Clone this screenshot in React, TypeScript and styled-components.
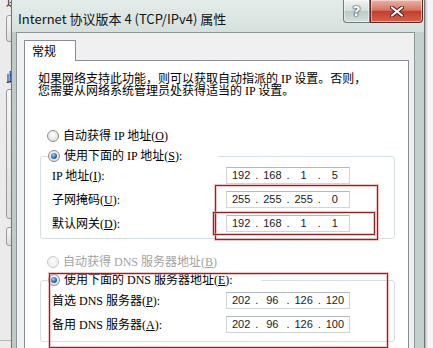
import React from "react";
import styled, { createGlobalStyle } from "styled-components";

const GlobalStyle = createGlobalStyle`
  html, body { margin: 0; padding: 0; }
  body { width: 433px; height: 348px; overflow: hidden; background: #f3f3f3; }
  #root { width: 433px; height: 348px; }
`;

const SONG = `"Liberation Serif", "Noto Sans CJK SC", serif`;
const UI = `"Noto Sans CJK SC", "Noto Sans", sans-serif`;

const Desktop = styled.div`
  position: relative;
  width: 433px;
  height: 348px;
  overflow: hidden;
  background: #f4f4f4;
`;

/* ---------- background window (left, mostly covered) ---------- */
const BackWindow = styled.div`
  display: flex;
  flex-direction: column;
  width: 120px;
  height: 100%;
  padding-left: 6px;
  box-sizing: border-box;
  background: #ebebeb;
  font: 12px/12px ${UI};
  color: #111;
`;
const BackCaption = styled.div`
  margin-top: -5px;
  height: 12px;
  white-space: nowrap;
`;
const BackBox = styled.div<{ $h: number; $mt: number }>`
  margin-top: ${(p) => p.$mt}px;
  height: ${(p) => p.$h}px;
  border: 1px solid #9a9a9a;
  border-radius: 3px;
  background: linear-gradient(#f7f7f7, #dedede);
`;
const BackLabel = styled.div`
  margin-top: 29px;
  height: 12px;
`;
const BackRule = styled.div`
  margin-top: 94px;
  height: 1px;
  margin-left: -6px;
  background: #b5b5b5;
`;

/* ---------- dialog ---------- */
const Dialog = styled.div`
  position: absolute;
  left: 11px;
  top: 0;
  width: 414px;
  bottom: -30px;
  box-sizing: border-box;
  display: flex;
  flex-direction: column;
  border: 1px solid #6b7877;
  border-top: none;
  background: linear-gradient(90deg, #bfcbc8, #d3dddb 50%, #c4d0cd);
  box-shadow: 1px 0 2px rgba(0, 0, 0, 0.35);
`;
const TitleBar = styled.div`
  display: flex;
  align-items: flex-start;
  height: 32px;
  padding-left: 6px;
  background: linear-gradient(#e4ecea, #d5e0dd);
`;
const Title = styled.div`
  flex: 1;
  padding-top: 11px;
  font: 13px/15px ${UI};
  color: #141414;
  white-space: nowrap;
`;
const CaptionButtons = styled.div`
  display: flex;
  margin-right: 1px;
`;
const CaptionButton = styled.div<{ $kind: "help" | "close" }>`
  display: flex;
  align-items: center;
  justify-content: center;
  box-sizing: border-box;
  height: 23px;
  width: ${(p) => (p.$kind === "help" ? 27 : 53)}px;
  border: 1px solid ${(p) => (p.$kind === "help" ? "#6d7b7a" : "#5b2a25")};
  border-top: none;
  border-radius: ${(p) => (p.$kind === "help" ? "0 0 0 4px" : "0 0 4px 0")};
  background: ${(p) =>
    p.$kind === "help"
      ? "linear-gradient(#f0f4f3, #d4dedc 48%, #bccac8 52%, #d6e0de)"
      : "linear-gradient(#eab3a8, #d67563 46%, #c2402f 52%, #d8604b)"};
  box-shadow: inset 0 0 0 1px rgba(255, 255, 255, 0.45);
`;
const HelpGlyph = styled.span`
  font: bold 14px/14px "DejaVu Sans", sans-serif;
  color: #ffffff;
  text-shadow: 0 0 1px #3a4747, 0 0 1px #3a4747, 0 0 2px #3a4747;
`;

const DialogBody = styled.div`
  flex: 1;
  display: flex;
  padding: 0 9px 0 4px;
`;
const Client = styled.div`
  flex: 1;
  display: flex;
  flex-direction: column;
  border: 1px solid #8b9796;
  border-bottom: none;
  background: #f0f0f0;
  padding: 7px 5px 0 7px;
`;
const TabStrip = styled.div`
  display: flex;
  margin-bottom: -1px;
  position: relative;
  z-index: 1;
`;
const Tab = styled.div`
  box-sizing: border-box;
  width: 52px;
  height: 21px;
  display: flex;
  align-items: center;
  padding-left: 7px;
  border: 1px solid #898c95;
  border-bottom: none;
  background: #ffffff;
  font: 12px/12px ${UI};
  color: #000;
`;
const Panel = styled.div`
  flex: 1;
  border: 1px solid #898c95;
  background: #ffffff;
  padding: 12px 0 0 13px;
  font: 12px/12px ${SONG};
  color: #000;
`;
const Intro = styled.p`
  margin: 0;
  white-space: nowrap;
  line-height: 12px;
`;
const Options = styled.div`
  display: flex;
  flex-direction: column;
  margin-top: 32px;
  margin-left: 2px;
`;
const RadioRow = styled.label<{ $disabled?: boolean; $mt?: number; $mb?: number }>`
  display: flex;
  align-items: center;
  gap: 4px;
  height: 14px;
  padding-left: 7px;
  margin-top: ${(p) => p.$mt ?? 0}px;
  margin-bottom: ${(p) => p.$mb ?? 0}px;
  color: ${(p) => (p.$disabled ? "#a2a2a2" : "#000")};
  white-space: nowrap;
`;
const Radio = styled.span<{ $checked?: boolean; $disabled?: boolean }>`
  box-sizing: border-box;
  width: 12px;
  height: 12px;
  flex: none;
  border-radius: 50%;
  border: 1px solid ${(p) => (p.$disabled ? "#c9c9c9" : "#8c8e8e")};
  background: ${(p) =>
    p.$disabled
      ? "radial-gradient(circle at 50% 40%, #fbfbfb, #ececec)"
      : "radial-gradient(circle at 50% 40%, #ffffff, #d8d8d8)"};
  display: flex;
  align-items: center;
  justify-content: center;
  &::after {
    content: "";
    display: ${(p) => (p.$checked ? "block" : "none")};
    width: 6px;
    height: 6px;
    border-radius: 50%;
    background: radial-gradient(circle at 40% 35%, #9fd0f5, #2a6aaa 55%, #163f72);
  }
`;
const Group = styled.fieldset<{ $pt: number; $pb: number }>`
  margin: 0;
  width: 355px;
  box-sizing: border-box;
  padding: ${(p) => p.$pt}px 0 ${(p) => p.$pb}px 11px;
  border: 1px solid #d5dfe5;
  border-radius: 3px;
`;
const GroupLegend = styled.legend<{ $w: number }>`
  padding: 0;
  margin-left: -4px;
  width: ${(p) => p.$w}px;
`;
const LegendRow = styled.span`
  display: flex;
  align-items: center;
  gap: 4px;
  height: 14px;
  white-space: nowrap;
`;
const FieldGrid = styled.div`
  display: grid;
  grid-template-columns: 174px 124px;
  grid-auto-rows: 17px;
  row-gap: 7px;
  align-items: center;
`;
const FieldLabel = styled.span`
  white-space: nowrap;
`;
const Key = styled.span`
  text-decoration: underline;
`;
const IpField = styled.div`
  box-sizing: border-box;
  display: flex;
  align-items: center;
  height: 17px;
  border: 1px solid #d2d6db;
  border-top-color: #b4b8bf;
  background: #fff;
  font: 11px/15px "Liberation Sans", Arial, sans-serif;
  color: #1a1a1a;
`;
const Octet = styled.span`
  flex: 1;
  text-align: center;
`;
const Dot = styled.span`
  width: 3px;
  text-align: center;
`;

const RedBox = styled.div<{ $x: number; $y: number; $w: number; $h: number }>`
  position: absolute;
  left: ${(p) => p.$x}px;
  top: ${(p) => p.$y}px;
  width: ${(p) => p.$w}px;
  height: ${(p) => p.$h}px;
  box-sizing: border-box;
  border: 1px solid #8a2626;
  box-shadow: 0 0 0 1px rgba(230, 150, 150, 0.55), inset 0 0 0 1px rgba(230, 150, 150, 0.55);
  pointer-events: none;
`;

const Ip = ({ parts }: { parts: string[] }) => (
  <IpField>
    <Octet>{parts[0]}</Octet>
    <Dot>.</Dot>
    <Octet>{parts[1]}</Octet>
    <Dot>.</Dot>
    <Octet>{parts[2]}</Octet>
    <Dot>.</Dot>
    <Octet>{parts[3]}</Octet>
  </IpField>
);

const CloseIcon = () => (
  <svg width="14" height="11" viewBox="0 0 14 11">
    <path d="M2 1.5 L12 9.5 M12 1.5 L2 9.5" stroke="#4a1a14" strokeWidth="4" strokeLinecap="round" />
    <path d="M2 1.5 L12 9.5 M12 1.5 L2 9.5" stroke="#ffffff" strokeWidth="2.2" strokeLinecap="round" />
  </svg>
);

export default function App() {
  return (
    <>
      <GlobalStyle />
      <Desktop>
        <BackWindow>
          <BackCaption>连接时使用:</BackCaption>
          <BackBox $mt={8} $h={25} />
          <BackLabel>此</BackLabel>
          <BackBox $mt={6} $h={128} />
          <BackBox $mt={8} $h={17} />
          <BackRule />
        </BackWindow>

        <Dialog>
          <TitleBar>
            <Title>Internet 协议版本 4 (TCP/IPv4) 属性</Title>
            <CaptionButtons>
              <CaptionButton $kind="help">
                <HelpGlyph>?</HelpGlyph>
              </CaptionButton>
              <CaptionButton $kind="close">
                <CloseIcon />
              </CaptionButton>
            </CaptionButtons>
          </TitleBar>
          <DialogBody>
            <Client>
              <TabStrip>
                <Tab>常规</Tab>
              </TabStrip>
              <Panel>
                <Intro>
                  如果网络支持此功能，则可以获取自动指派的 IP 设置。否则，
                  <br />
                  您需要从网络系统管理员处获得适当的 IP 设置。
                </Intro>
                <Options>
                  <RadioRow $mb={6}>
                    <Radio />
                    <span>
                      自动获得 IP 地址(<Key>O</Key>)
                    </span>
                  </RadioRow>
                  <Group $pt={4} $pb={6}>
                    <GroupLegend $w={170}>
                      <LegendRow>
                        <Radio $checked />
                        <span>
                          使用下面的 IP 地址(<Key>S</Key>):
                        </span>
                      </LegendRow>
                    </GroupLegend>
                    <FieldGrid>
                      <FieldLabel>
                        IP 地址(<Key>I</Key>):
                      </FieldLabel>
                      <Ip parts={["192", "168", "1", "5"]} />
                      <FieldLabel>
                        子网掩码(<Key>U</Key>):
                      </FieldLabel>
                      <Ip parts={["255", "255", "255", "0"]} />
                      <FieldLabel>
                        默认网关(<Key>D</Key>):
                      </FieldLabel>
                      <Ip parts={["192", "168", "1", "1"]} />
                    </FieldGrid>
                  </Group>
                  <RadioRow $disabled $mt={16} $mb={4}>
                    <Radio $disabled />
                    <span>
                      自动获得 DNS 服务器地址(<Key>B</Key>)
                    </span>
                  </RadioRow>
                  <Group $pt={5} $pb={8}>
                    <GroupLegend $w={213}>
                      <LegendRow>
                        <Radio $checked />
                        <span>
                          使用下面的 DNS 服务器地址(<Key>E</Key>):
                        </span>
                      </LegendRow>
                    </GroupLegend>
                    <FieldGrid>
                      <FieldLabel>
                        首选 DNS 服务器(<Key>P</Key>):
                      </FieldLabel>
                      <Ip parts={["202", "96", "126", "120"]} />
                      <FieldLabel>
                        备用 DNS 服务器(<Key>A</Key>):
                      </FieldLabel>
                      <Ip parts={["202", "96", "126", "100"]} />
                    </FieldGrid>
                  </Group>
                </Options>
              </Panel>
            </Client>
          </DialogBody>
        </Dialog>

        <RedBox $x={215} $y={185} $w={163} $h={55} />
        <RedBox $x={213} $y={212} $w={162} $h={23} />
        <RedBox $x={49} $y={273} $w={339} $h={75} />
      </Desktop>
    </>
  );
}
